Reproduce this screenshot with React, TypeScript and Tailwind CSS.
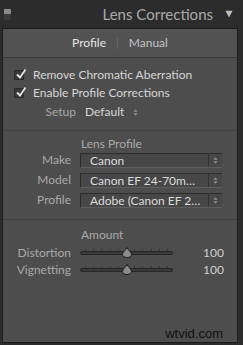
import React from 'react';

const font = { fontFamily: 'Lato, "Open Sans", sans-serif' };

function Check({ label }: { label: string }) {
  return (
    <div className="flex items-center h-[18px] pl-[11px] gap-[9px]">
      <div className="relative w-[10px] h-[10px] bg-[#3a3a3a] border border-[#2a2a2a]">
        <svg viewBox="0 0 12 12" className="absolute -top-[3px] left-[0px] w-[12px] h-[12px]">
          <path d="M2 6.5 L5 9.5 L10.5 1.5" fill="none" stroke="#e6e6e6" strokeWidth="1.8" />
        </svg>
      </div>
      <span className="text-[12px] text-[#d6d6d6]">{label}</span>
    </div>
  );
}

function UpDown() {
  return (
    <svg viewBox="0 0 6 10" className="w-[5px] h-[9px]">
      <path d="M0.5 4 L3 1 L5.5 4 Z M0.5 6 L3 9 L5.5 6 Z" fill="#8e8e8e" />
    </svg>
  );
}

function SelectRow({ label, value }: { label: string; value: string }) {
  return (
    <div className="flex items-center h-[20px]">
      <span className="w-[68px] text-right text-[12px] text-[#a9a9a9]">{label}</span>
      <div className="ml-[9px] flex h-[15px] w-[142px] border-t border-l border-[#2c2c2c] border-b border-b-[#5f5f5f] bg-[#474747]">
        <span className="flex-1 pl-[9px] text-[12px] leading-[14px] text-[#dcdcdc] whitespace-nowrap overflow-hidden">{value}</span>
        <div className="w-[14px] flex items-center justify-center border-l border-[#333]">
          <UpDown />
        </div>
      </div>
    </div>
  );
}

function Slider({ label }: { label: string }) {
  return (
    <div className="flex items-center h-[17px]">
      <span className="w-[68px] text-right text-[12px] text-[#a9a9a9]">{label}</span>
      <div className="ml-[9px] relative w-[93px] h-[10px] flex items-center">
        <div className="w-full h-[4px] rounded-full bg-[#3a3a3a] border border-[#262626]" />
        <div className="absolute inset-x-[5px] top-[1px] flex justify-between">
          {Array.from({ length: 11 }).map((_, i) => (
            <div key={i} className="w-[1px] h-[2px] bg-[#383838]" />
          ))}
        </div>
        <svg viewBox="0 0 10 11" className="absolute left-[42px] top-[-1px] w-[10px] h-[11px]">
          <path d="M5 0.5 C6 3 9.5 5 9.5 7.5 C9.5 9.5 7.5 10.5 5 10.5 C2.5 10.5 0.5 9.5 0.5 7.5 C0.5 5 4 3 5 0.5 Z" fill="#8c8c8c" stroke="#1e1e1e" strokeWidth="1" />
        </svg>
      </div>
      <span className="ml-auto pr-[13px] text-[12px] text-[#cfcfcf]">100</span>
    </div>
  );
}

export default function App() {
  return (
    <div className="w-[243px] h-[345px] bg-[#2c2c2c] overflow-hidden flex flex-col" style={font}>
      <div className="h-[28px] flex items-center pl-[4px]">
        <div className="w-[7px] h-[11px] bg-[#3a3a3a] flex flex-col">
          <div className="h-[5px] bg-[#8a8a8a]" />
        </div>
        <span className="ml-auto text-[15px] text-[#aaaaaa]">Lens Corrections</span>
        <svg viewBox="0 0 10 10" className="ml-[12px] mr-[10px] w-[8px] h-[8px]">
          <path d="M0.5 1 L9.5 1 L5 9.5 Z" fill="#bdbdbd" />
        </svg>
      </div>
      <div className="ml-[2px] mr-[5px] mb-[2px] flex-1 border border-[#1c1c1c] bg-[#4d4d4d] flex flex-col">
        <div className="h-[29px] flex items-center justify-center border-b border-[#3c3c3c] bg-[#525252]">
          <span className="text-[12px] text-[#e6e6e6]">Profile</span>
          <span className="mx-[10px] text-[11px] text-[#6c6c6c]">|</span>
          <span className="text-[12px] text-[#c2c2c2]">Manual</span>
        </div>
        <div className="pt-[8px]">
          <Check label="Remove Chromatic Aberration" />
          <Check label="Enable Profile Corrections" />
          <div className="flex items-center h-[20px]">
            <span className="w-[73px] text-right text-[12px] text-[#a9a9a9]">Setup</span>
            <span className="ml-[9px] text-[12px] text-[#d6d6d6]">Default</span>
            <span className="ml-[9px] flex items-center"><UpDown /></span>
          </div>
        </div>
        <div className="mt-[8px] border-t border-[#424242]" />
        <div className="pl-[78px] pt-[4px] h-[19px] text-[12px] text-[#a9a9a9]">Lens Profile</div>
        <SelectRow label="Make" value="Canon" />
        <SelectRow label="Model" value="Canon EF 24-70m…" />
        <SelectRow label="Profile" value="Adobe (Canon EF 2…" />
        <div className="mt-[9px] border-t border-[#424242]" />
        <div className="pl-[78px] pt-[6px] h-[24px] text-[12px] text-[#a9a9a9]">Amount</div>
        <Slider label="Distortion" />
        <Slider label="Vignetting" />
        <div className="mt-auto mb-[1px] pr-[14px] h-[14px] leading-[14px] text-right text-[13px] text-[#111]" style={{ fontFamily: '"Liberation Sans", sans-serif' }}>
          wtvid.com
        </div>
      </div>
    </div>
  );
}
